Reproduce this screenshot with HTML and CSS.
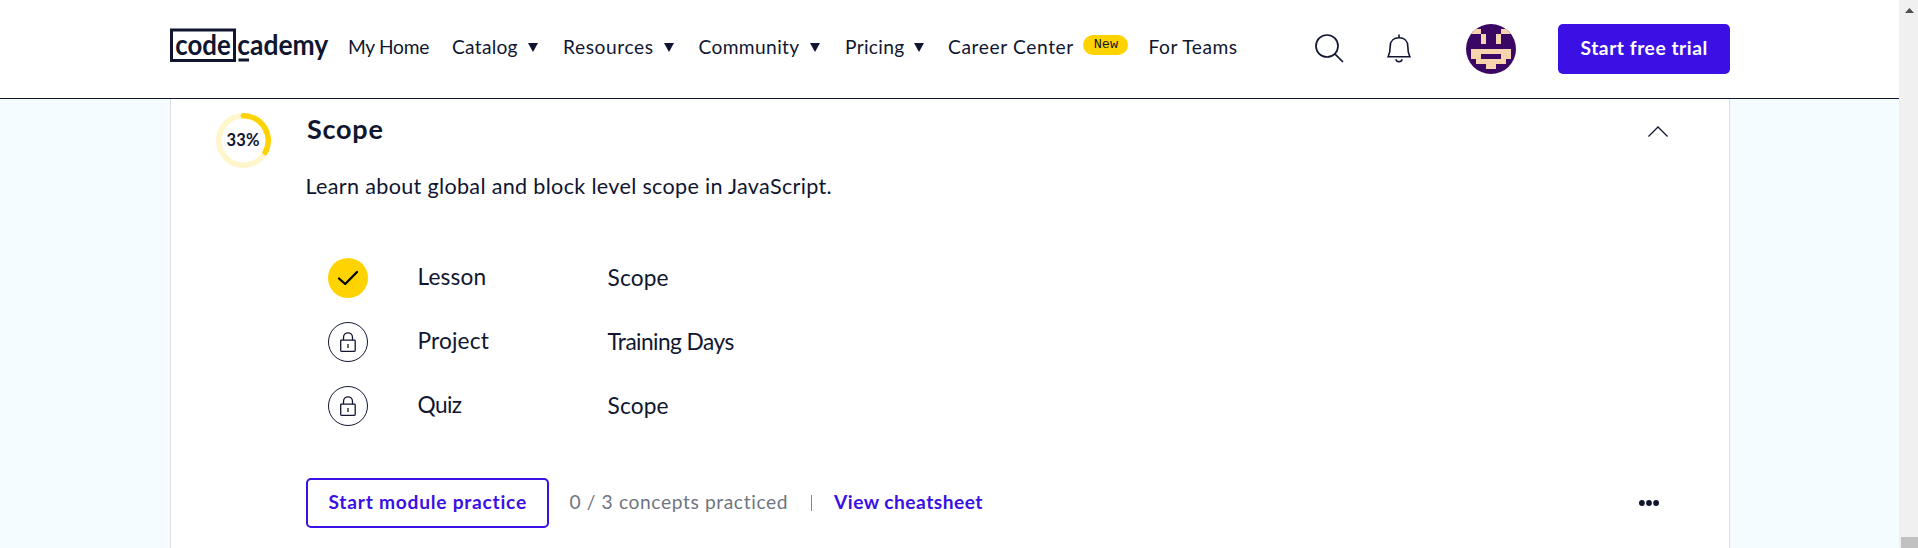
FILE: index.html
```html
<!DOCTYPE html>
<html lang="en">
<head>
<meta charset="utf-8">
<title>Codecademy</title>
<link rel="stylesheet" href="styles.css">
</head>
<body>
<div class="page">
  <header class="header">
    <a class="logo">
      <svg width="164" height="40" viewBox="0 0 164 40">
        <rect x="1.5" y="2" width="63" height="30.500" fill="none" stroke="#10162f" stroke-width="3"/>
        <rect x="68.500" y="30.500" width="10.500" height="3" fill="#10162f"/>
        <text x="5.200" y="27" textLength="55.500" lengthAdjust="spacingAndGlyphs">code</text>
        <text x="67.300" y="27" textLength="91" lengthAdjust="spacingAndGlyphs">cademy</text>
      </svg>
    </a>
    <nav class="nav">
      <a class="item home">My Home</a>
      <a class="item catalog">Catalog<i class="caret"></i></a>
      <a class="item resources">Resources<i class="caret"></i></a>
      <a class="item community">Community<i class="caret"></i></a>
      <a class="item pricing">Pricing<i class="caret"></i></a>
      <a class="item career">Career Center<span class="badge">New</span></a>
      <a class="item teams">For Teams</a>
    </nav>
    <svg class="search" width="30" height="30" viewBox="0 0 30 30" fill="none" stroke="#10162f" stroke-width="1.7"><circle cx="12" cy="12" r="11"/><path d="M19.800 19.800 28 28"/></svg>
    <svg class="bell" width="24" height="30" viewBox="0 0 24 30" fill="none" stroke="#10162f" stroke-width="1.6"><path d="M12 .5V4M1.200 22.700h21.600c-1.500-3.100-2-5.300-2-10.300C20.800 7 17.200 3.800 12 3.800S3.200 7 3.200 12.400c0 5-.5 7.200-2 10.300ZM9 25.300c.3 3.300 5.700 3.300 6 0"/></svg>
    <svg class="avatar" width="50" height="50" viewBox="0 0 10 10" shape-rendering="crispEdges"><rect width="10" height="10" fill="#3b0764"/><path fill="#f7d4ae" d="M0 1h3v1H0zM7 1h3v1H7zM3 2h1v2H3zM6 2h1v2H6zM1 5h8v2H8v1H6v1H4V8H2V7H1zM3 6v1h4V6z" fill-rule="evenodd"/></svg>
    <a class="trial">Start free trial</a>
  </header>
  <main class="main">
    <section class="card">
      <div class="progress">
        <svg width="56" height="56" viewBox="0 0 56 56" fill="none" stroke-width="5.6"><circle cx="27.500" cy="27.500" r="24.700" stroke="#fff6cc"/><path d="M27.500 2.800A24.700 24.700 0 0 1 49.200 39.300" stroke="#ffd300" stroke-linecap="round"/></svg>
        <span class="percent">33%</span>
      </div>
      <div class="body">
        <div class="head">
          <h2 class="title">Scope</h2>
          <svg class="chevron" width="20" height="12" viewBox="0 0 20 12" fill="none" stroke="#10162f" stroke-width="1.3"><path d="M.4 10.500 10 1l9.600 9.500"/></svg>
        </div>
        <p class="desc">Learn about global and block level scope in JavaScript.</p>
        <ul class="list">
          <li class="row">
            <svg width="40" height="40" viewBox="0 0 40 40"><circle cx="20" cy="20" r="20" fill="#ffd300"/><path d="m11 20.500 6.200 5.500L29 14" fill="none" stroke="#000" stroke-width="2.300" stroke-linecap="round" stroke-linejoin="round"/></svg>
            <span class="kind">Lesson</span><span class="name">Scope</span>
          </li>
          <li class="row">
            <svg width="40" height="40" viewBox="0 0 40 40" fill="none" stroke="#10162f"><circle cx="20" cy="20" r="19.500"/><g stroke-width="1.300"><rect x="12.700" y="18.100" width="14.500" height="11.300" rx=".8"/><path d="M15.500 18v-2.500c0-6.300 9-6.300 9 0V18M20 22v4"/></g></svg>
            <span class="kind">Project</span><span class="name training">Training Days</span>
          </li>
          <li class="row">
            <svg width="40" height="40" viewBox="0 0 40 40" fill="none" stroke="#10162f"><circle cx="20" cy="20" r="19.500"/><g stroke-width="1.300"><rect x="12.700" y="18.100" width="14.500" height="11.300" rx=".8"/><path d="M15.500 18v-2.500c0-6.300 9-6.300 9 0V18M20 22v4"/></g></svg>
            <span class="kind quiz">Quiz</span><span class="name">Scope</span>
          </li>
        </ul>
        <div class="actions">
          <a class="practice">Start module practice</a>
          <span class="count">0 / 3 concepts practiced</span>
          <i class="divider"></i>
          <a class="sheet">View cheatsheet</a>
          <svg class="more" width="20" height="6" viewBox="0 0 20 6" fill="#10162f"><circle cx="2.900" cy="3" r="2.900"/><circle cx="10" cy="3" r="2.900"/><circle cx="17.100" cy="3" r="2.900"/></svg>
        </div>
      </div>
    </section>
  </main>
</div>
<div class="scrollbar">
  <svg width="9" height="5" viewBox="0 0 9 5"><path d="M4.500 0 9 5H0z" fill="#505050"/></svg>
  <div class="thumb"></div>
</div>
</body>
</html>
```
FILE: styles.css
```css
* { box-sizing: border-box; }
body {
  margin: 0;
  height: 548px;
  display: flex;
  overflow: hidden;
  color: #10162f;
  font: 19.200px/50px Lato, "Open Sans", sans-serif;
}
.page { width: 1899px; display: flex; flex-direction: column; }
.header {
  height: 99px;
  flex: none;
  display: flex;
  align-items: flex-start;
  border-bottom: 1px solid #10162f;
  background: #fff;
  padding: 24px 0 0 170px;
}
.logo { width: 178px; height: 40px; margin-top: 4px; }
.logo svg { display: block; }
.logo text { font: 700 28px Lato, sans-serif; fill: #10162f; }
.nav {
  display: grid;
  grid-template-columns: 104px 111px 135.500px 146.500px 103px 200.500px 100px;
  margin-top: -2px;
  white-space: nowrap;
}
.item { display: flex; align-items: center; height: 50px; }
.home { letter-spacing: -.3px; }
.catalog { letter-spacing: .26px; }
.resources { letter-spacing: .57px; }
.community { letter-spacing: .36px; }
.pricing { letter-spacing: .3px; }
.career { letter-spacing: .61px; }
.teams { letter-spacing: .5px; }
.caret {
  margin-left: 10px;
  border: solid transparent;
  border-width: 9px 5.500px 0;
  border-top-color: #10162f;
}
.badge {
  width: 45px;
  height: 20px;
  margin: -4px 0 0 9.500px;
  border-radius: 10px;
  background: #ffd300;
  font: 13.500px/20px "Liberation Mono", monospace;
  letter-spacing: 0;
  text-align: center;
}
.search { margin: 10px 0 0 66px; }
.bell { margin: 10px 0 0 42.500px; }
.avatar { margin-left: 55px; border-radius: 50%; }
.trial {
  width: 172px;
  height: 50px;
  margin-left: 42px;
  padding-left: 22.500px;
  border-radius: 5px;
  background: #3a10e5;
  color: #fff;
  font-weight: 700;
  line-height: 48px;
  letter-spacing: .55px;
}
.main { flex: 1; background: #f5fcff; padding-left: 170px; }
.card {
  width: 1560px;
  height: 449px;
  display: flex;
  padding: 14px 61px 0 45px;
  background: #fff;
  border: solid #dddfe3;
  border-width: 0 1px;
}
.progress { display: grid; width: 56px; height: 56px; place-items: center; margin-right: 34px; }
.progress > * { grid-area: 1 / 1; }
.percent { font-size: 16.500px; font-weight: 700; line-height: 20px; letter-spacing: .18px; padding: 0 2px 3px 0; }
.body { flex: 1; }
.head { display: flex; justify-content: space-between; height: 31px; }
.title { margin: 0 0 0 1px; font-size: 27px; line-height: 32px; letter-spacing: .75px; }
.chevron { margin-top: 13px; }
.desc { margin: 27px 0 57px -.5px; font-size: 21.600px; line-height: 30px; letter-spacing: .31px; }
.list { list-style: none; margin: 0; padding: 0 0 0 22px; display: grid; row-gap: 24px; }
.row { display: grid; grid-template-columns: 89.500px 190px 1fr; height: 40px; font-size: 22.700px; line-height: 40px; letter-spacing: .15px; }
.kind { margin-top: -1.500px; }
.name { margin-top: -.5px; }
.training { letter-spacing: -.55px; }
.quiz { letter-spacing: -.6px; }
.actions { display: flex; align-items: center; height: 50px; margin-top: 52px; line-height: 46px; }
.practice {
  width: 243px;
  height: 50px;
  padding-left: 20.500px;
  border: 2px solid #3a10e5;
  border-radius: 5px;
  color: #3a10e5;
  font-weight: 700;
  line-height: 44px;
  letter-spacing: .75px;
}
.count { width: 241px; margin: -2px 0 0 20.500px; color: #70747f; letter-spacing: .62px; }
.divider { width: 1.500px; height: 16px; background: #85888f; }
.sheet { margin: -2px 0 0 22px; color: #3a10e5; font-weight: 700; letter-spacing: .47px; }
.more { margin: 0 9px 0 auto; }
.scrollbar { width: 19px; background: #f0f0f0; display: flex; flex-direction: column; align-items: flex-end; }
.scrollbar svg { margin: 8px 4px 0 0; }
.thumb { width: 17px; height: 11px; margin-top: auto; background: #c1c1c1; }
```
